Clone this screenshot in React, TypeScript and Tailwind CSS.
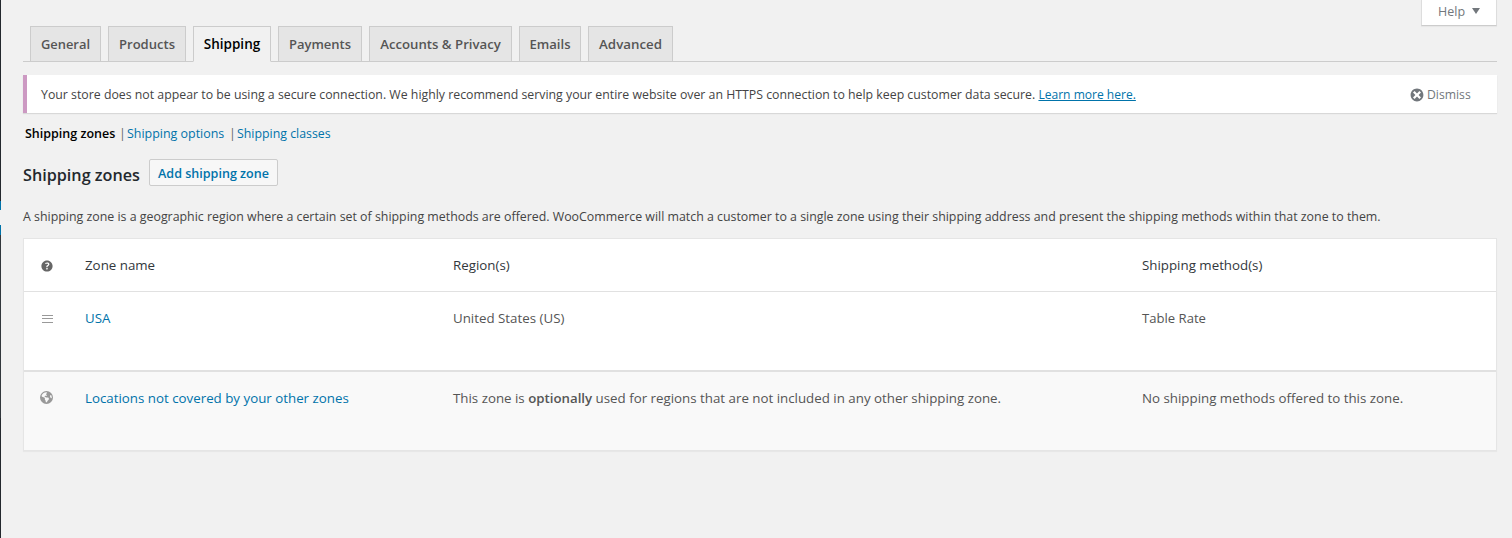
import React from "react";
import { FaEarthAmericas } from "react-icons/fa6";

const tabs = [
  { label: "General", size: "w-[71px] text-[12.9px]" },
  { label: "Products", size: "w-[78px] text-[13.05px]" },
  { label: "Shipping", size: "w-[78px] text-[13.5px]", active: true },
  { label: "Payments", size: "w-[84px] text-[13px]" },
  { label: "Accounts & Privacy", size: "w-[143px] text-[13.2px]" },
  { label: "Emails", size: "w-[62px] text-[13.1px]" },
  { label: "Advanced", size: "w-[85px] text-[13.3px]" },
];

function DismissIcon() {
  return (
    <svg viewBox="0 0 20 20" className="size-4 shrink-0" fill="currentColor">
      <path d="M10 2c4.42 0 8 3.58 8 8s-3.58 8-8 8-8-3.58-8-8 3.58-8 8-8zm5 11l-3-3 3-3-2-2-3 3-3-3-2 2 3 3-3 3 2 2 3-3 3 3z" />
    </svg>
  );
}

function HelpIcon() {
  return (
    <svg viewBox="0 0 20 20" className="size-4" fill="currentColor">
      <path d="M17 10c0-3.87-3.14-7-7-7-3.87 0-7 3.13-7 7s3.13 7 7 7c3.86 0 7-3.13 7-7zm-6.3 1.48H9.14v-.43c0-.38.08-.7.24-.98s.46-.57.88-.89c.41-.29.68-.53.81-.71.14-.18.2-.39.2-.62 0-.25-.09-.44-.28-.58-.19-.13-.45-.19-.79-.19-.58 0-1.25.19-2 .57l-.64-1.28c.87-.49 1.8-.74 2.77-.74.81 0 1.45.2 1.92.58.48.39.71.91.71 1.55 0 .43-.09.8-.29 1.11-.19.32-.57.67-1.11 1.06-.38.28-.61.49-.71.63-.1.15-.15.34-.15.57v.35zm-1.47 2.74c-.18-.17-.27-.42-.27-.73 0-.33.08-.58.26-.75s.43-.25.77-.25c.32 0 .57.09.75.26s.27.42.27.74c0 .3-.09.55-.27.72-.18.18-.43.27-.75.27-.33 0-.58-.09-.76-.26z" />
    </svg>
  );
}

export default function App() {
  return (
    <div className="flex h-[538px] overflow-hidden bg-[#f1f1f1] font-['Open_Sans','Liberation_Sans',sans-serif] text-[#444]">
      <div className="flex w-px shrink-0 flex-col bg-[#23282d]">
        <div className="mt-[201px] h-[9px] bg-[#0073aa]" />
        <div className="h-[15px] bg-[#f1f1f1]" />
        <div className="h-[10px] bg-[#0073aa]" />
        <div className="h-[183px] bg-[#32373c]" />
      </div>

      <div className="relative ml-[22px] flex w-[1474px] flex-col">
        <button className="absolute top-0 right-0 flex h-[26px] w-[76px] items-center border border-t-0 border-[#ddd] border-b-[#ccc] bg-white pl-4 text-[12.5px] text-[#72777c] shadow-[0_1px_1px_rgba(0,0,0,0.04)]">
          Help
          <svg viewBox="0 0 8 6" className="mb-[3px] ml-[7px] h-[6px] w-[8px]" fill="currentColor">
            <path d="M0 0h8L4 6z" />
          </svg>
        </button>

        <nav className="mt-[26px] flex h-[36px] gap-[7px] border-b border-[#ccc] pl-[7px]">
          {tabs.map((t) => (
            <a
              key={t.label}
              className={`flex h-9 justify-center whitespace-nowrap border border-[#ccc] font-semibold leading-[35px] ${t.size} ${
                t.active ? "border-b-[#f1f1f1] bg-[#f1f1f1] text-black" : "bg-[#e5e5e5] text-[#555]"
              }`}
            >
              {t.label}
            </a>
          ))}
        </nav>

        <div className="mt-[13px] flex h-[38px] items-center whitespace-nowrap border-l-4 border-[#cc99c2] bg-white pt-[2px] pr-[27px] pl-[14px] text-[12.32px] shadow-[0_1px_1px_0_rgba(0,0,0,0.1)]">
          <span>
            Your store does not appear to be using a secure connection. We highly recommend serving your entire website
            over an HTTPS connection to help keep customer data secure.{" "}
            <a className="text-[12.05px] text-[#0073aa] underline">Learn more here.</a>
          </span>
          <a className="ml-auto flex items-center gap-[2px] text-[#72777c]">
            <DismissIcon />
            <span className="w-[43px] text-[12.2px]">Dismiss</span>
          </a>
        </div>

        <div className="mt-[12px] flex h-[18px] items-center whitespace-nowrap pl-[2px] text-[12.45px] text-[#0073aa]">
          <a className="w-[94px] text-[12.5px] font-semibold text-black">Shipping zones</a>
          <span className="w-[8px] text-[#666]">|</span>
          <a className="w-[102px]">Shipping options</a>
          <span className="w-[8px] text-[#666]">|</span>
          <a className="text-[12.35px]">Shipping classes</a>
        </div>

        <div className="mt-[16px] flex h-[27px]">
          <h2 className="w-[126px] whitespace-nowrap pt-[4px] text-[16.2px] leading-6 font-semibold text-[#23282d]">Shipping zones</h2>
          <button className="flex h-[27px] w-[129px] items-center justify-center rounded-[2px] border border-[#ccc] bg-[#f7f7f7] pt-[3px] text-[12.55px] font-semibold whitespace-nowrap text-[#0073aa]">
            Add shipping zone
          </button>
        </div>

        <p className="mt-[21px] h-[31px] text-[12.38px] leading-[19px] whitespace-nowrap">
          A shipping zone is a geographic region where a certain set of shipping methods are offered. WooCommerce will
          match a customer to a single zone using their shipping address and present the shipping methods within that
          zone to them.
        </p>

        <div className="flex h-[213px] shrink-0 flex-col border border-[#e5e5e5] bg-white text-[13.32px] leading-5 text-[#555] shadow-[0_1px_1px_rgba(0,0,0,0.04)]">
          <div className="grid h-[53px] grid-cols-[61px_368px_689px_1fr] border-b border-[#e1e1e1] pt-4 text-[#32373c]">
            <span className="pt-[3px] pl-[15px] text-[#666]">
              <HelpIcon />
            </span>
            <span>Zone name</span>
            <span>Region(s)</span>
            <span>Shipping method(s)</span>
          </div>
          <div className="grid h-[80px] grid-cols-[61px_368px_689px_1fr] border-b-2 border-[#e1e1e1] pt-4">
            <span className="flex flex-col pt-[7px] pl-[18px]">
              <i className="h-px w-[11px] bg-[#999]" />
              <i className="mt-[2px] h-px w-[11px] bg-[#999]" />
              <i className="mt-[3px] h-px w-[11px] bg-[#999]" />
            </span>
            <a className="text-[#0073aa]">USA</a>
            <span>United States (US)</span>
            <span className="text-[13.1px]">Table Rate</span>
          </div>
          <div className="grid h-[78px] grid-cols-[61px_368px_689px_1fr] bg-[#f9f9f9] pt-4">
            <span className="pt-[3px] pl-[16px] text-[#999]">
              <FaEarthAmericas className="size-[13px]" />
            </span>
            <a className="text-[#0073aa]">Locations not covered by your other zones</a>
            <span>
              This zone is <b className="text-[13.25px] font-semibold">optionally</b> used for regions that are not
              included in any other shipping zone.
            </span>
            <span>No shipping methods offered to this zone.</span>
          </div>
        </div>
      </div>
    </div>
  );
}
